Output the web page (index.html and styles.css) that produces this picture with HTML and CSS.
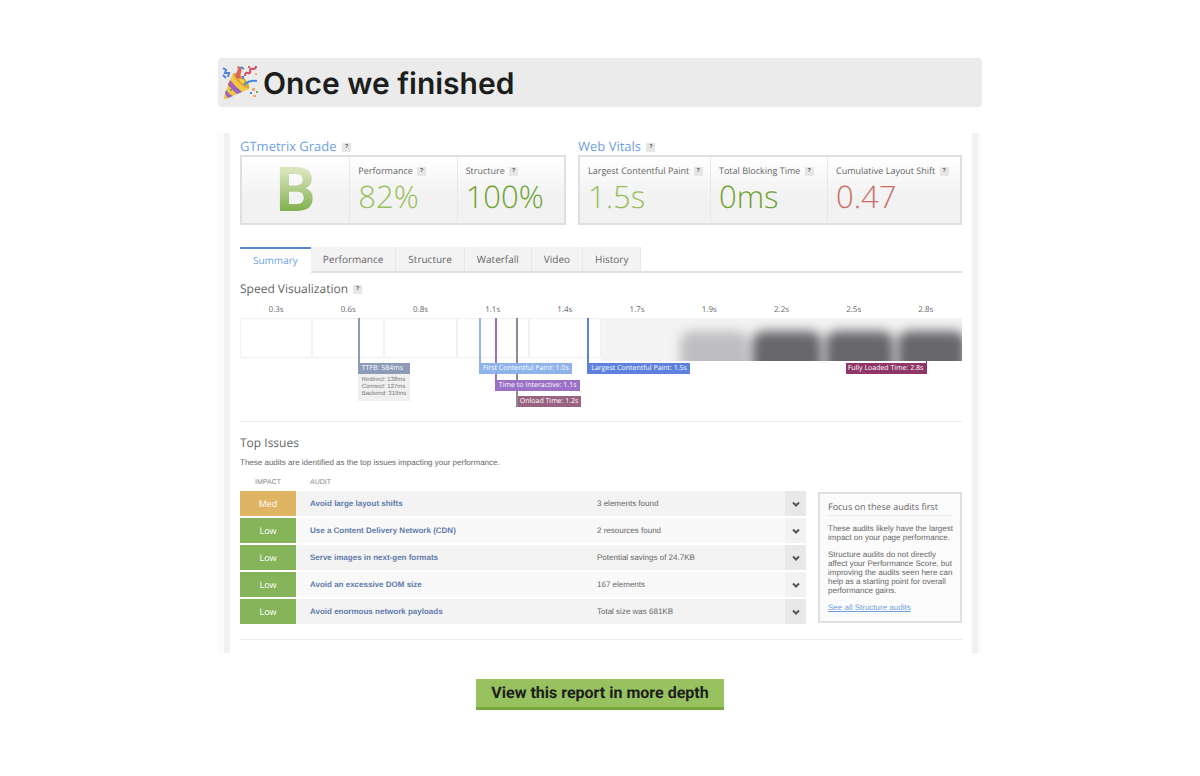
FILE: index.html
```html
<!DOCTYPE html>
<html lang="en">
	<head>
		<meta charset="UTF-8">
		<title>Once we finished</title>
		<link rel="stylesheet" href="styles.css">
	</head>
	<body>
		<main class="page">
			<h1 class="banner">
				<svg class="popper" viewBox="0 0 36 36" aria-hidden="true">
					<path d="M11 8 L27 24 L4 34 Q1 35 2 31 Z" fill="#f2c744"/>
					<path d="M8 15 Q14 22 20 27 L15 29 Q10 25 6 20 Z" fill="#9a63c4"/>
					<path d="M4 25 Q7 29 11 31 L6 33 Q4 31 3 28 Z" fill="#9a63c4"/>
					<path d="M11 8 Q19 9 23 14 Q28 19 27 24 Q21 22 16 17 Q12 13 11 8Z" fill="#dfa02f"/>
					<path d="M15 11 Q22 13 25 21 Q19 19 15 11Z" fill="#f5d04f"/>
					<path d="M14 13 C12 7 18 6 15 1 L19 2 C21 7 17 9 19 14Z" fill="#d9655b"/>
					<path d="M22 20 Q27 15 35 16" fill="none" stroke="#4e86dd" stroke-width="2"/>
					<path d="M1 3 l3 2 l-1 3 l4 0 l-1 4 M1 10 l3 3 M19 2 l3 2" fill="none" stroke="#4e86dd" stroke-width="2"/>
					<path d="M23 11 q0-4 3-3 q3 1 2-3 q0-2 3-1 q3 0 3-3" fill="none" stroke="#cf4f63" stroke-width="2"/>
					<path d="M26 1 h2 v2 h-2z M6 18 h2 v3 h-2z" fill="#d9655b"/>
					<path d="M30 23 h3 v3 h-3z M31 30 h3 v2 h-3z M33 8 h2 v2 h-2z" fill="#f0a868"/>
					<path d="M28 27 h2 v2 h-2z M20 11 h2 v3 h-2z" fill="#4e86dd"/>
					<path d="M8 24 h2 v2 h-2z M22 17 h2 v2 h-2z M34 26 h2 v2 h-2z" fill="#6fae4c"/>
				</svg>
				Once we finished
			</h1>

			<section class="report" id="report">
				<div class="scores">
					<section class="score-group grade">
						<h2 class="score-title">GTmetrix Grade <span class="help">?</span></h2>
						<div class="score-box">
							<div class="cell letter">B</div>
							<div class="cell">
								<h3>Performance <span class="help">?</span></h3>
								<p class="value good">82%</p>
							</div>
							<div class="cell">
								<h3>Structure <span class="help">?</span></h3>
								<p class="value great">100%</p>
							</div>
						</div>
					</section>
					<section class="score-group vitals">
						<h2 class="score-title">Web Vitals <span class="help">?</span></h2>
						<div class="score-box">
							<div class="cell">
								<h3>Largest Contentful Paint <span class="help">?</span></h3>
								<p class="value good">1.5s</p>
							</div>
							<div class="cell">
								<h3>Total Blocking Time <span class="help">?</span></h3>
								<p class="value great">0ms</p>
							</div>
							<div class="cell">
								<h3>Cumulative Layout Shift <span class="help">?</span></h3>
								<p class="value bad">0.47</p>
							</div>
						</div>
					</section>
				</div>

				<nav class="tabs">
					<a href="#summary" class="active">Summary</a>
					<a href="#performance">Performance</a>
					<a href="#structure">Structure</a>
					<a href="#waterfall">Waterfall</a>
					<a href="#video">Video</a>
					<a href="#history">History</a>
				</nav>

				<section class="speed" id="summary">
					<h2 class="heading">Speed Visualization <span class="help">?</span></h2>
					<div class="ruler">
						<span>0.3s</span><span>0.6s</span><span>0.8s</span><span>1.1s</span><span>1.4s</span>
						<span>1.7s</span><span>1.9s</span><span>2.2s</span><span>2.5s</span><span>2.8s</span>
					</div>
					<div class="timeline">
						<div class="strip">
							<i class="frame"></i><i class="frame"></i><i class="frame"></i><i class="frame"></i><i class="frame"></i>
							<i class="frame shot"></i>
							<i class="frame shot faint"></i>
							<i class="frame shot dark"></i>
							<i class="frame shot dark"></i>
							<i class="frame shot dark"></i>
						</div>
						<div class="marker row-1 ttfb" style="left: 16.3%">
							<span class="tag">TTFB: 584ms</span>
							<ul class="detail">
								<li>Redirect: 138ms</li>
								<li>Connect: 127ms</li>
								<li>Backend: 319ms</li>
							</ul>
						</div>
						<div class="marker row-3 unload" style="left: 38.2%"><span class="tag">Onload Time: 1.2s</span></div>
						<div class="marker row-2 tti" style="left: 35.3%"><span class="tag">Time to Interactive: 1.1s</span></div>
						<div class="marker row-1 fcp" style="left: 33.1%"><span class="tag">First Contentful Paint: 1.0s</span></div>
						<div class="marker row-1 lcp" style="left: 48.1%"><span class="tag">Largest Contentful Paint: 1.5s</span></div>
						<div class="marker loaded" style="right: 4.8%"><span class="tag">Fully Loaded Time: 2.8s</span></div>
					</div>
				</section>

				<section class="issues">
					<h2 class="heading">Top Issues</h2>
					<p class="intro">These audits are identified as the top issues impacting your performance.</p>
					<div class="issues-body">
						<table class="audits">
							<thead>
								<tr><th class="impact">Impact</th><th class="audit">Audit</th><th></th><th class="more"></th></tr>
							</thead>
							<tbody>
								<tr>
									<td class="impact med">Med</td>
									<td class="audit">Avoid large layout shifts</td>
									<td>3 elements found</td>
									<td class="more"><button type="button" aria-label="Expand"><svg viewBox="0 0 8 6"><path d="M1 1.5 L4 4.5 L7 1.5"/></svg></button></td>
								</tr>
								<tr>
									<td class="impact">Low</td>
									<td class="audit">Use a Content Delivery Network (CDN)</td>
									<td>2 resources found</td>
									<td class="more"><button type="button" aria-label="Expand"><svg viewBox="0 0 8 6"><path d="M1 1.5 L4 4.5 L7 1.5"/></svg></button></td>
								</tr>
								<tr>
									<td class="impact">Low</td>
									<td class="audit">Serve images in next-gen formats</td>
									<td>Potential savings of 24.7KB</td>
									<td class="more"><button type="button" aria-label="Expand"><svg viewBox="0 0 8 6"><path d="M1 1.5 L4 4.5 L7 1.5"/></svg></button></td>
								</tr>
								<tr>
									<td class="impact">Low</td>
									<td class="audit">Avoid an excessive DOM size</td>
									<td>167 elements</td>
									<td class="more"><button type="button" aria-label="Expand"><svg viewBox="0 0 8 6"><path d="M1 1.5 L4 4.5 L7 1.5"/></svg></button></td>
								</tr>
								<tr>
									<td class="impact">Low</td>
									<td class="audit">Avoid enormous network payloads</td>
									<td>Total size was 681KB</td>
									<td class="more"><button type="button" aria-label="Expand"><svg viewBox="0 0 8 6"><path d="M1 1.5 L4 4.5 L7 1.5"/></svg></button></td>
								</tr>
							</tbody>
						</table>
						<aside class="focus">
							<h3>Focus on these audits first</h3>
							<p>These audits likely have the largest impact on your page performance.</p>
							<p>Structure audits do not directly affect your Performance Score, but improving the audits seen here can help as a starting point for overall performance gains.</p>
							<a href="#structure">See all Structure audits</a>
						</aside>
					</div>
				</section>
			</section>

			<a class="cta" href="#report">View this report in more depth</a>
		</main>
	</body>
</html>
```

FILE: styles.css
```css
*{
	margin: 0;
	padding: 0;
	box-sizing: border-box;
	list-style: none;
}
body{
	background: #fff;
	color: #666;
	font-family: "Liberation Sans", Arial, sans-serif;
	font-size: 8px;
	text-rendering: geometricPrecision;
}
.page{
	max-width: 764px;
	margin: 0 auto;
	padding: 58px 0;
	display: flex;
	flex-direction: column;
	gap: 26px;
}

/* title bar */
.banner{
	display: flex;
	align-items: center;
	gap: 5px;
	padding: 6px 4px 2px;
	border-radius: 4px;
	background: #ebebeb;
	color: #1c1e1d;
	font: 600 30px/41px Inter, sans-serif;
}
.popper{
	width: 36px;
	height: 36px;
	margin-bottom: 4px;
}

/* report sheet */
.report{
	padding: 5px 10px 13px;
	margin: 0 4px 0 6px;
	border: solid #f1f1f1;
	border-width: 0 6px;
	box-shadow: -6px 0 #fbfbfb, 4px 0 #fbfbfb;
}
.scores{
	display: flex;
	gap: 12px;
}
.grade{
	flex: 326;
}
.vitals{
	flex: 384;
}
.score-title{
	color: #6f9fe0;
	font: 400 13px/17px "Open Sans", sans-serif;
}
.help{
	display: inline-block;
	width: 9px;
	margin-left: 2px;
	background: #e6e6e6;
	color: #555;
	font: 700 6px/9px "Liberation Sans", Arial, sans-serif;
	text-align: center;
	vertical-align: middle;
}
.score-box{
	display: grid;
	grid-template-columns: 1fr 1fr 1fr;
	height: 70px;
	border: 2px solid #dfdfdf;
	background: linear-gradient(#fff, #f2f2f2 60%);
}
.vitals .score-box{
	grid-template-columns: 130fr 117fr 133fr;
}
.cell{
	padding: 6px 0 0 8px;
	border-left: 1px solid #e8e8e8;
	white-space: nowrap;
}
.cell:first-child{
	border-left: 0;
}
.cell h3{
	font: 400 9px/15px "Open Sans", sans-serif;
}
.value{
	font: 300 31px/38px "Open Sans", sans-serif;
}
.good{
	color: #96c05c;
}
.great{
	color: #6fa232;
}
.bad{
	color: #cb6d65;
}
.letter{
	padding: 0;
	background: linear-gradient(#dbe5bd 20%, #7db04c 80%);
	background-clip: text;
	color: transparent;
	font: 700 62px/68px Roboto, sans-serif;
	text-align: center;
}

.tabs{
	display: flex;
	margin-top: 22px;
	border-bottom: 2px solid #dfdfdf;
}
.tabs a{
	padding: 1px 12px;
	border-right: 1px solid #e8e8e8;
	background: #f3f3f3;
	color: #666;
	font: 400 10px/22px "Open Sans", sans-serif;
	text-decoration: none;
}
.tabs .active{
	padding: 0 13px;
	margin-bottom: -2px;
	border-top: 2px solid #5b87cf;
	border-right: 0;
	background: #fff;
	color: #6f9fe0;
}

/* filmstrip */
.heading{
	font: 400 12px/16px "Open Sans", sans-serif;
}
.speed{
	padding-top: 8px;
	border-bottom: 1px solid #ebebeb;
}
.ruler{
	display: grid;
	grid-template-columns: repeat(10, 1fr);
	padding: 7px 0 2px;
	font: 400 8px/12px "Open Sans", sans-serif;
	text-align: center;
}
.timeline{
	position: relative;
	padding-bottom: 60px;
}
.strip{
	display: grid;
	grid-template-columns: repeat(10, 1fr);
	height: 43px;
	overflow: hidden;
	background: linear-gradient(to right, #fff 50%, #f4f4f4 50%);
}
.frame{
	height: 40px;
	border: 1px solid #f1f1f1;
}
.shot{
	height: 43px;
	border: 0;
}
.shot::before{
	content: "";
	display: block;
	height: 56px;
	margin: 13px -4px 0 7px;
	border-radius: 12px;
	filter: blur(6px);
}
.faint::before{
	background: #bebec2;
}
.dark::before{
	background: #66666b;
}
.marker{
	position: absolute;
	top: 0;
	border-left: 2px solid;
	white-space: nowrap;
}
.row-1{
	padding-top: 45px;
}
.row-2{
	padding-top: 62px;
}
.row-3{
	padding-top: 78px;
}
.tag{
	display: block;
	padding: 0 3px 0 2px;
	background: currentColor;
	font: 400 7px/11px "Open Sans", sans-serif;
}
.tag::first-line{
	color: #fff;
}
.ttfb{
	color: #8d9bb9;
}
.fcp{
	color: #8db3ea;
}
.tti{
	color: #9b70c6;
}
.unload{
	border-color: #8c8c8c;
	color: #9a6382;
}
.lcp{
	color: #5d81dc;
}
.loaded{
	top: 43px;
	padding-top: 2px;
	border-width: 0 1px 0 0;
	border-right-style: solid;
	color: #8d3667;
}
.detail{
	margin-left: -2px;
	padding: 3px 4px;
	background: #efefef;
	color: #777;
	font-size: 6px;
	line-height: 7px;
}

/* audits */
.issues{
	padding-top: 13px;
}
.intro{
	padding-top: 7px;
	line-height: 10px;
}
.issues-body{
	display: flex;
	align-items: flex-end;
	gap: 12px;
	padding-bottom: 13px;
	border-bottom: 1px solid #ebebeb;
}
.audits{
	flex: 1;
	border-collapse: separate;
	border-spacing: 0 2px;
	table-layout: fixed;
}
.audits th{
	height: 19px;
	padding-top: 6px;
	color: #888;
	font-size: 7px;
	font-weight: 400;
	text-align: left;
	text-transform: uppercase;
}
.audits td{
	height: 25px;
	background: #f9f9f9;
}
.audits tr:nth-child(odd) td{
	background: #f3f3f3;
}
.audits .audit{
	width: 301px;
	padding-left: 14px;
}
.audits td.audit{
	color: #5f7bab;
	font-weight: 700;
}
.audits .impact{
	width: 56px;
	text-align: center;
}
.audits tr td.impact{
	background: #86b45a;
	color: #fff;
	font: 400 9px/12px "Open Sans", sans-serif;
}
.audits tr td.med{
	background: #dfb563;
}
.audits .more{
	width: 21px;
}
.more button{
	display: flex;
	align-items: center;
	justify-content: center;
	width: 100%;
	height: 25px;
	border: 0;
	background: #f2f2f2;
}
.audits tr:nth-child(odd) button{
	background: #e8e8e8;
}
.more svg{
	width: 8px;
	height: 6px;
	fill: none;
	stroke: #555;
	stroke-width: 2;
}
.focus{
	width: 144px;
	margin-bottom: 3px;
	padding: 5px 4px 9px 8px;
	border: 2px solid #dfdfdf;
	background: #fbfbfb;
	line-height: 9px;
}
.focus h3{
	margin: 0 4px 8px 0;
	border-bottom: 1px solid #ebebeb;
	font: 400 9px/16px "Open Sans", sans-serif;
}
.focus p{
	margin-bottom: 8px;
}
.focus a{
	color: #6f9fe0;
}

.cta{
	align-self: center;
	padding: 0 15px;
	border-bottom: 3px solid #76a63c;
	background: #97c25f;
	color: #1c1e1d;
	font: 700 16px/28px Roboto, sans-serif;
	text-decoration: none;
}
```
